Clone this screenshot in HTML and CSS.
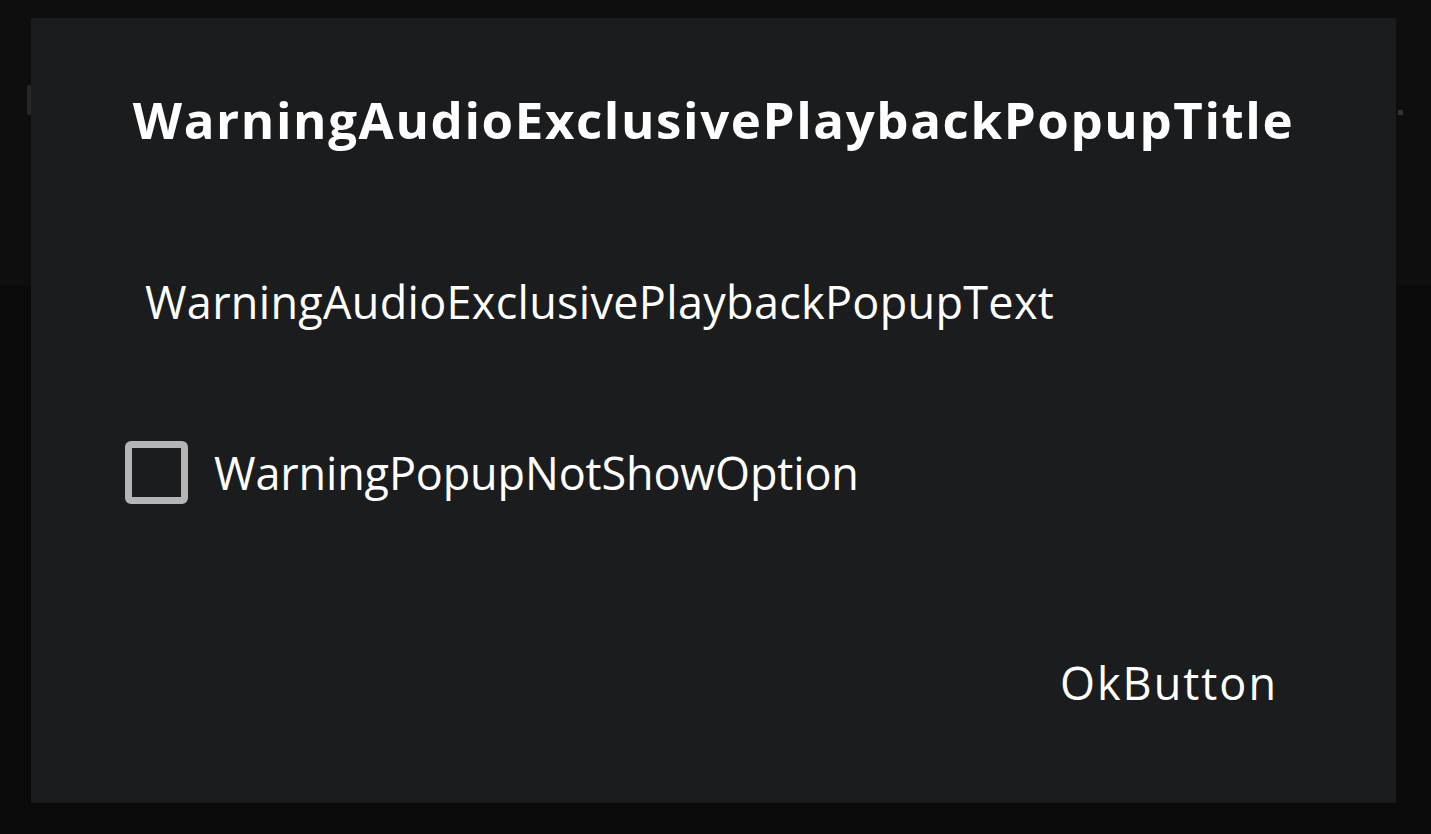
FILE: index.html
```html
<!DOCTYPE html>
<html lang="en">
<head>
    <meta charset="UTF-8">
    <meta name="viewport" content="width=device-width, initial-scale=1.0">
    <title>Warning</title>
    <link rel="stylesheet" href="styles.css">
</head>
<body>
    <div class="page-header">
        <div class="settings-row">
            <div class="row-handle"></div>
            <div class="row-dot"></div>
        </div>
    </div>

    <div class="popup">
        <h1 class="popup-title">WarningAudioExclusivePlaybackPopupTitle</h1>
        <p class="popup-text">WarningAudioExclusivePlaybackPopupText</p>
        <label class="popup-option">
            <span class="checkbox"></span>
            <span>WarningPopupNotShowOption</span>
        </label>
        <div class="popup-actions">
            <button class="ok-btn">OkButton</button>
        </div>
    </div>
</body>
</html>
```

FILE: styles.css
```css
body {
    margin: 0;
    background-color: #0a0a0a;
    font-family: "Open Sans", "Noto Sans", sans-serif;
    color: #fff;
    height: 834px;
    overflow: hidden;
}
.page-header {
    height: 285px;
    background-color: #0e0e0e;
    padding-top: 85px;
    box-sizing: border-box;
}
.settings-row {
    display: flex;
    justify-content: space-between;
    padding: 0 28px 0 27px;
}
.row-handle {
    width: 40px;
    height: 30px;
    background-color: #262626;
    border-radius: 2px;
}
.row-dot {
    width: 5px;
    height: 5px;
    margin-top: 25px;
    background-color: #333;
}
.popup {
    position: fixed;
    top: 18px;
    left: 31px;
    width: 1365px;
    height: 785px;
    box-sizing: border-box;
    padding: 76px 120px 0 94px;
    background-color: #1b1c1e;
    border-bottom: 1px solid #161718;
    display: flex;
    flex-direction: column;
}
.popup-title {
    margin: 0 -120px 0 -94px;
    text-align: center;
    font-size: 51px;
    line-height: 1;
    letter-spacing: 1.6px;
    font-weight: 700;
}
.popup-text {
    margin: 134px 0 0 20px;
    font-size: 45px;
    line-height: 1;
    letter-spacing: 0.3px;
}
.popup-option {
    margin-top: 117px;
    display: flex;
    align-items: center;
    gap: 26px;
    font-size: 45px;
    line-height: 1;
    letter-spacing: -0.15px;
}
.checkbox {
    width: 63px;
    height: 63px;
    box-sizing: border-box;
    border: 7px solid #b5b5b5;
    border-radius: 6px;
}
.popup-actions {
    margin-top: 156px;
    display: flex;
    justify-content: flex-end;
}
.ok-btn {
    background: none;
    border: none;
    padding: 0;
    margin-right: -2px;
    color: #fff;
    font-family: inherit;
    font-size: 45px;
    line-height: 1;
    letter-spacing: 2px;
}
```
